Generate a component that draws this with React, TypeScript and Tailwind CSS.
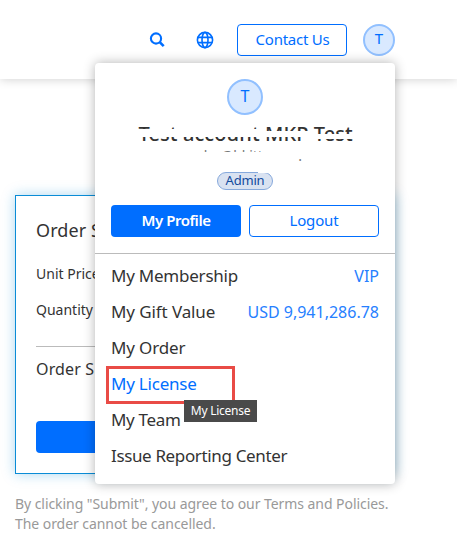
import React from "react";

function Globe() {
  return (
    <svg width="18" height="18" viewBox="0 0 18 18" fill="none" stroke="#006eff" strokeWidth="1.6">
      <circle cx="9" cy="9" r="7.6" />
      <ellipse cx="9" cy="9" rx="3" ry="7.6" />
      <path d="M2 6.4h14M2 11.6h14" />
    </svg>
  );
}

function Search() {
  return (
    <svg width="16" height="16" viewBox="0 0 16 16" fill="none" stroke="#006eff">
      <circle cx="7" cy="6.5" r="5.1" strokeWidth="2.1" />
      <path d="M10.7 10.2l4 4" strokeWidth="2.6" />
    </svg>
  );
}

const items = [
  { label: "My Membership", value: "VIP", cls: "tracking-[-0.23px]" },
  { label: "My Gift Value", value: "USD 9,941,286.78", cls: "tracking-[-0.1px]" },
  { label: "My Order", cls: "tracking-[-0.15px]" },
  { label: "My License", active: true, cls: "tracking-[-0.22px]" },
  { label: "My Team", cls: "tracking-[-0.3px]" },
  { label: "Issue Reporting Center", cls: "tracking-[-0.36px]" },
];

export default function App() {
  return (
    <div className="relative h-[549px] w-[457px] overflow-hidden bg-white font-['Noto_Sans',sans-serif] text-[#333]">
      <header className="flex h-[79px] items-center justify-end gap-4 pr-[62px] shadow-[0_0_10px_rgba(0,0,0,0.2)]">
        <div className="mr-[7px] flex items-center gap-[31px]">
          <Search />
          <Globe />
        </div>
        <button className="h-8 w-[110px] rounded border border-[#006eff] pb-[2px] pl-px text-[15px] leading-[22px] tracking-[-0.25px] text-[#006eff]">Contact Us</button>
        <div className="flex size-8 items-center justify-center rounded-full border-2 border-[#91c0ff] bg-[#d9e9ff] pb-[2px] text-[15px] text-[#006eff]">T</div>
      </header>
      <main className="px-[15px] pt-[116px]">
        <section className="h-[279px] w-[380px] border border-[#0a8cd6] px-5 pt-[22px] shadow-[0_0_12px_rgba(16,144,216,0.35)]">
          <h2 className="text-[18px] leading-6 tracking-[0.1px]">Order S</h2>
          <p className="mt-[22px] text-[14px] leading-5">Unit Price</p>
          <p className="mt-4 text-[14px] leading-5">Quantity</p>
          <div className="mt-[26px] border-t border-[#bbb]" />
          <p className="mt-[10px] text-[16px] leading-6 tracking-[0.15px]">Order S</p>
          <div className="mt-10 h-8 rounded bg-[#006eff]" />
        </section>
        <p className="mt-5 whitespace-nowrap text-[14px] leading-5 tracking-[-0.06px] text-[#999]">By clicking "Submit", you agree to our Terms and Policies.<br />The order cannot be cancelled.</p>
      </main>
      <div className="absolute left-[95px] top-[63px] h-[421px] w-[300px] rounded bg-white shadow-[0_0_12px_rgba(0,0,0,0.3)]">
        <div className="flex flex-col items-center pt-4">
          <div className="flex size-9 items-center justify-center rounded-full border-2 border-[#91c0ff] bg-[#d9e9ff] pb-[2px] text-[16px] text-[#006eff]">T</div>
          <div className="relative mt-[7px] h-6 w-[213px] whitespace-nowrap text-[20px] font-medium leading-6 tracking-[0.1px]">
            Test account MKP Test
            <div className="absolute left-0 top-[7px] h-2 w-[124px] bg-white" />
            <div className="absolute left-[124px] top-[9px] h-[6px] w-[46px] bg-white" />
            <div className="absolute left-[170px] top-[12px] h-[5px] w-[50px] bg-white" />
          </div>
          <div className="relative h-5 w-[116px] text-[14px] leading-5 text-[#777]">
            <span className="flex justify-between pr-px tracking-[-0.1px]">
              <span className="-ml-[2px]">order@hkitt</span>
              <span>.</span>
            </span>
            <div className="absolute -left-2 top-[6px] h-4 w-[118px] bg-white" />
          </div>
          <div className="relative mt-[6px] flex h-[18px] w-14 items-center justify-center rounded-full border border-[#86a9dc] bg-[#d9e2f1] text-[13px] tracking-[-0.2px] text-[#134a9c]">
            Admin
            <div className="absolute -top-px left-10 h-px w-[12px] bg-white" />
          </div>
        </div>
        <div className="mt-[15px] flex gap-2 px-4">
          <button className="h-8 w-[130px] rounded bg-[#006eff] pb-[2px] text-[15px] font-semibold tracking-[-0.45px] text-white">My Profile</button>
          <button className="h-8 w-[130px] rounded border border-[#006eff] pb-[2px] text-[15px] tracking-[-0.15px] text-[#006eff]">Logout</button>
        </div>
        <div className="mt-4 border-t border-[#bbb]" />
        <ul className="px-4 pt-1 text-[17px]">
          {items.map((i) => (
            <li key={i.label} className="flex h-9 items-center justify-between">
              <span className={i.cls + (i.active ? " text-[#006eff]" : "")}>{i.label}</span>
              <span className="text-[16px] text-[#2680ff]">{i.value}</span>
            </li>
          ))}
        </ul>
      </div>
      <div className="absolute left-[106px] top-[366px] h-[38px] w-[129px] border-[3px] border-[#e94b46]" />
      <div className="absolute left-[184px] top-[400px] flex h-[22px] w-[73px] items-center justify-center bg-[#4a4a4a] text-[12px] tracking-[-0.25px] text-white">My License</div>
    </div>
  );
}
